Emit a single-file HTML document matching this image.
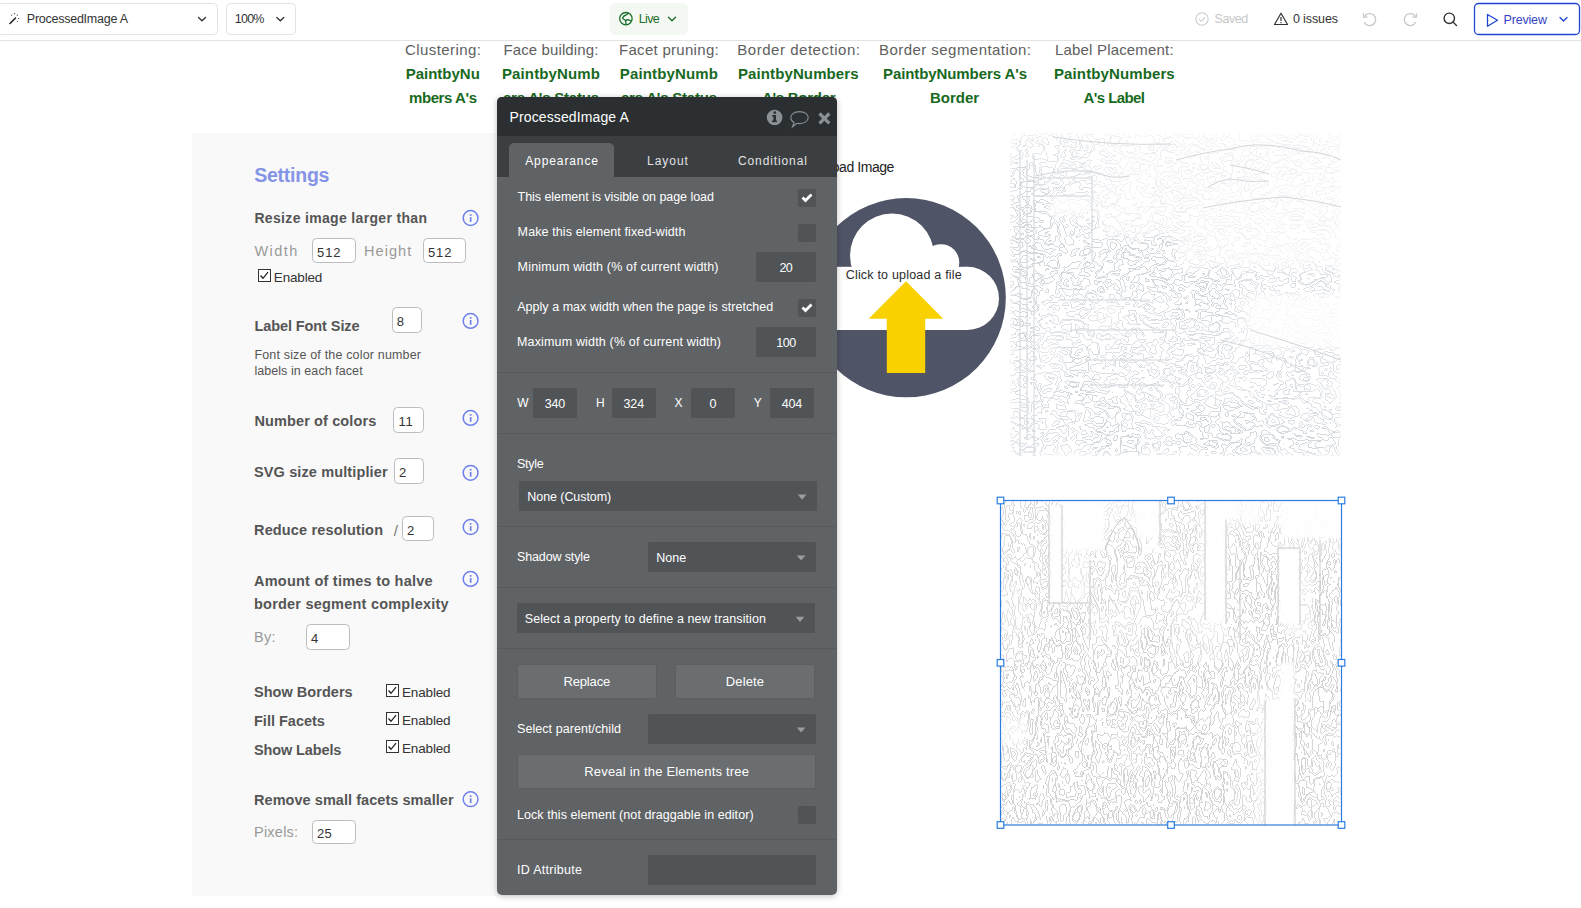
<!DOCTYPE html><html><head><meta charset="utf-8"><title>Bubble editor</title><style>html,body{margin:0;padding:0;background:#fff;overflow:hidden}svg{display:block}text{font-family:"Liberation Sans",sans-serif;white-space:pre}</style></head><body>
<svg width="1581" height="908" viewBox="0 0 1581 908">
<defs><filter id="sh" x="-10%" y="-10%" width="120%" height="120%"><feGaussianBlur in="SourceAlpha" stdDeviation="3"/><feOffset dy="1"/><feComponentTransfer><feFuncA type="linear" slope="0.25"/></feComponentTransfer><feMerge><feMergeNode/><feMergeNode in="SourceGraphic"/></feMerge></filter></defs>
<rect x="0" y="0" width="1581.00" height="908.00" fill="#ffffff"/>
<rect x="0" y="40" width="1581.00" height="1.00" fill="#e3e3e3"/>
<rect x="-2.5" y="3.5" width="220.00" height="31.00" fill="#ffffff" rx="4" stroke="#e2e2e2" stroke-width="1"/>
<rect x="226.5" y="3.5" width="69.00" height="31.00" fill="#ffffff" rx="4" stroke="#e2e2e2" stroke-width="1"/>
<rect x="610" y="3" width="78.00" height="32.00" fill="#f3f8f3" rx="6"/>
<rect x="1474.5" y="3.5" width="105.00" height="31.00" fill="#ffffff" rx="4" stroke="#1f45d1" stroke-width="1.3"/>
<g fill="none" stroke="#333" stroke-width="1.3" stroke-linecap="round"><path d="M198.5 17.5 L202 20.8 L205.5 17.5"/><path d="M276.8 17.5 L280.3 20.8 L283.8 17.5"/></g>
<path d="M10 23.5 L15.5 18" stroke="#222" stroke-width="1.6" stroke-linecap="round"/><g fill="#444"><circle cx="14.5" cy="13.8" r="0.7"/><circle cx="11.7" cy="15.2" r="0.6"/><circle cx="17.3" cy="15.2" r="0.6"/><circle cx="18.6" cy="18.5" r="0.6"/><circle cx="17.3" cy="21.5" r="0.6"/></g>
<g fill="none" stroke="#1b6e2a" stroke-width="1.3"><circle cx="625.9" cy="18.7" r="6.2"/><path d="M622.4 18.3 Q623.5 15.6 626 15 Q627.5 14.5 628 13.2"/><path d="M622.4 18.3 L625.5 20.6 L626.1 24.6"/><path d="M625.5 20.6 Q627.5 18.6 631.4 21.3"/><path d="M668.5 17.3 L672 20.8 L675.5 17.3" stroke-linecap="round"/></g>
<g fill="none" stroke="#cccccc" stroke-width="1.1"><circle cx="1202" cy="19" r="6.2"/><path d="M1199 19.2 L1201.2 21.3 L1205 17.3"/></g>
<g fill="none" stroke="#333" stroke-width="1.2" stroke-linejoin="round"><path d="M1281 13.2 L1287.5 24.5 L1274.5 24.5 Z"/></g><rect x="1280.4" y="17" width="1.2" height="4" fill="#333"/><rect x="1280.4" y="22" width="1.2" height="1.2" fill="#333"/>
<g fill="none" stroke="#c8c8c8" stroke-width="1.3"><path d="M1364.5 16.5 A6 6 0 1 1 1364.2 22"/><path d="M1363.3 13.5 L1363.8 17.3 L1367.5 16.8"/><path d="M1415.5 16.5 A6 6 0 1 0 1415.8 22"/><path d="M1416.7 13.5 L1416.2 17.3 L1412.5 16.8"/></g>
<g fill="none" stroke="#333" stroke-width="1.4"><circle cx="1449.3" cy="18.3" r="5.2"/><path d="M1453 22 L1456.5 25.5" stroke-linecap="round"/></g>
<path d="M1487.5 14.5 L1497.5 20.3 L1487.5 26.2 Z" fill="none" stroke="#1f45d1" stroke-width="1.3" stroke-linejoin="round"/><path d="M1560 17.5 L1563.5 21 L1567 17.5" fill="none" stroke="#1f45d1" stroke-width="1.3" stroke-linecap="round"/>
<text x="26.80" y="23.00" font-size="12.5" fill="#333333" textLength="101.17" lengthAdjust="spacing">ProcessedImage A</text>
<text x="234.80" y="22.80" font-size="12.5" fill="#333333" textLength="29.62" lengthAdjust="spacing">100%</text>
<text x="638.70" y="22.90" font-size="12.5" fill="#1b6e2a" textLength="21.08" lengthAdjust="spacing">Live</text>
<text x="1214.60" y="22.80" font-size="12.5" fill="#c6c6c6" textLength="33.69" lengthAdjust="spacing">Saved</text>
<text x="1292.90" y="22.80" font-size="12.5" fill="#333333" textLength="45.10" lengthAdjust="spacing">0 issues</text>
<text x="1503.50" y="23.70" font-size="12.5" fill="#3443c6" textLength="43.41" lengthAdjust="spacing">Preview</text>
<text x="405.00" y="55.00" font-size="15" fill="#606060" textLength="76.00" lengthAdjust="spacing">Clustering:</text>
<text x="503.40" y="55.00" font-size="15" fill="#606060" textLength="94.99" lengthAdjust="spacing">Face building:</text>
<text x="619.00" y="55.00" font-size="15" fill="#606060" textLength="99.69" lengthAdjust="spacing">Facet pruning:</text>
<text x="737.30" y="55.00" font-size="15" fill="#606060" textLength="122.68" lengthAdjust="spacing">Border detection:</text>
<text x="879.00" y="55.00" font-size="15" fill="#606060" textLength="152.01" lengthAdjust="spacing">Border segmentation:</text>
<text x="1055.00" y="55.00" font-size="15" fill="#606060" textLength="118.60" lengthAdjust="spacing">Label Placement:</text>
<text x="405.70" y="79.30" font-size="15" fill="#17691e" font-weight="700">PaintbyNu</text>
<text x="502.00" y="79.30" font-size="15" fill="#17691e" font-weight="700" textLength="97.82" lengthAdjust="spacing">PaintbyNumb</text>
<text x="619.80" y="79.30" font-size="15" fill="#17691e" font-weight="700" textLength="98.02" lengthAdjust="spacing">PaintbyNumb</text>
<text x="738.00" y="79.30" font-size="15" fill="#17691e" font-weight="700" textLength="120.59" lengthAdjust="spacing">PaintbyNumbers</text>
<text x="883.00" y="79.30" font-size="15" fill="#17691e" font-weight="700" textLength="144.00" lengthAdjust="spacing">PaintbyNumbers A&#39;s</text>
<text x="1054.00" y="79.30" font-size="15" fill="#17691e" font-weight="700" textLength="120.69" lengthAdjust="spacing">PaintbyNumbers</text>
<text x="409.00" y="102.70" font-size="15" fill="#17691e" font-weight="700" textLength="67.97" lengthAdjust="spacing">mbers A&#39;s</text>
<text x="503.00" y="102.70" font-size="15" fill="#17691e" font-weight="700" textLength="95.98" lengthAdjust="spacing">ers A&#39;s Status</text>
<text x="621.00" y="102.70" font-size="15" fill="#17691e" font-weight="700" textLength="95.98" lengthAdjust="spacing">ers A&#39;s Status</text>
<text x="762.00" y="102.70" font-size="15" fill="#17691e" font-weight="700" textLength="73.58" lengthAdjust="spacing">A&#39;s Border</text>
<text x="930.00" y="102.70" font-size="15" fill="#17691e" font-weight="700">Border</text>
<text x="1083.60" y="102.70" font-size="15" fill="#17691e" font-weight="700" textLength="61.39" lengthAdjust="spacing">A&#39;s Label</text>
<rect x="192" y="133" width="328.00" height="763.00" fill="#f9f9f9"/>
<rect x="312.5" y="238.5" width="43.00" height="24.00" fill="#ffffff" rx="4" stroke="#bdbdbd" stroke-width="1"/>
<rect x="423.5" y="238.5" width="42.00" height="24.00" fill="#ffffff" rx="4" stroke="#bdbdbd" stroke-width="1"/>
<rect x="392.5" y="307.5" width="29.00" height="25.00" fill="#ffffff" rx="4" stroke="#bdbdbd" stroke-width="1"/>
<rect x="393.5" y="407.5" width="30.00" height="25.00" fill="#ffffff" rx="4" stroke="#bdbdbd" stroke-width="1"/>
<rect x="394.5" y="458.5" width="29.00" height="25.00" fill="#ffffff" rx="4" stroke="#bdbdbd" stroke-width="1"/>
<rect x="402.5" y="516.5" width="31.00" height="24.00" fill="#ffffff" rx="4" stroke="#bdbdbd" stroke-width="1"/>
<rect x="306.5" y="624.5" width="43.00" height="25.00" fill="#ffffff" rx="4" stroke="#bdbdbd" stroke-width="1"/>
<rect x="312.5" y="820.5" width="43.00" height="23.00" fill="#ffffff" rx="4" stroke="#bdbdbd" stroke-width="1"/>
<rect x="258.5" y="269.5" width="12.00" height="12.00" fill="#ffffff" stroke="#333" stroke-width="1"/>
<path d="M260.5 275.5 L263 278.3 L268 272.2" fill="none" stroke="#222" stroke-width="1.3"/>
<rect x="386.5" y="684.5" width="12.00" height="12.00" fill="#ffffff" stroke="#333" stroke-width="1"/>
<path d="M388.5 690.5 L391 693.3 L396 687.2" fill="none" stroke="#222" stroke-width="1.3"/>
<rect x="386.5" y="712.5" width="12.00" height="12.00" fill="#ffffff" stroke="#333" stroke-width="1"/>
<path d="M388.5 718.5 L391 721.3 L396 715.2" fill="none" stroke="#222" stroke-width="1.3"/>
<rect x="386.5" y="740.5" width="12.00" height="12.00" fill="#ffffff" stroke="#333" stroke-width="1"/>
<path d="M388.5 746.5 L391 749.3 L396 743.2" fill="none" stroke="#222" stroke-width="1.3"/>
<circle cx="470.6" cy="218" r="7.4" fill="none" stroke="#6f80ee" stroke-width="1.5"/><rect x="469.8" y="217.1" width="1.7" height="4.8" fill="#6f80ee"/><rect x="469.8" y="214.1" width="1.7" height="1.7" fill="#6f80ee"/>
<circle cx="470.6" cy="320.9" r="7.4" fill="none" stroke="#6f80ee" stroke-width="1.5"/><rect x="469.8" y="320.0" width="1.7" height="4.8" fill="#6f80ee"/><rect x="469.8" y="317.0" width="1.7" height="1.7" fill="#6f80ee"/>
<circle cx="470.6" cy="417.9" r="7.4" fill="none" stroke="#6f80ee" stroke-width="1.5"/><rect x="469.8" y="417.0" width="1.7" height="4.8" fill="#6f80ee"/><rect x="469.8" y="414.0" width="1.7" height="1.7" fill="#6f80ee"/>
<circle cx="470.6" cy="472.8" r="7.4" fill="none" stroke="#6f80ee" stroke-width="1.5"/><rect x="469.8" y="471.9" width="1.7" height="4.8" fill="#6f80ee"/><rect x="469.8" y="468.9" width="1.7" height="1.7" fill="#6f80ee"/>
<circle cx="470.6" cy="527" r="7.4" fill="none" stroke="#6f80ee" stroke-width="1.5"/><rect x="469.8" y="526.1" width="1.7" height="4.8" fill="#6f80ee"/><rect x="469.8" y="523.1" width="1.7" height="1.7" fill="#6f80ee"/>
<circle cx="470.6" cy="578.9" r="7.4" fill="none" stroke="#6f80ee" stroke-width="1.5"/><rect x="469.8" y="578.0" width="1.7" height="4.8" fill="#6f80ee"/><rect x="469.8" y="575.0" width="1.7" height="1.7" fill="#6f80ee"/>
<circle cx="470.6" cy="799.2" r="7.4" fill="none" stroke="#6f80ee" stroke-width="1.5"/><rect x="469.8" y="798.3" width="1.7" height="4.8" fill="#6f80ee"/><rect x="469.8" y="795.3" width="1.7" height="1.7" fill="#6f80ee"/>
<text x="254.20" y="181.70" font-size="19.5" fill="#8494e6" font-weight="700" textLength="75.28" lengthAdjust="spacing">Settings</text>
<text x="254.40" y="223.00" font-size="14" fill="#555555" font-weight="700" textLength="172.60" lengthAdjust="spacing">Resize image larger than</text>
<text x="254.40" y="255.80" font-size="14.5" fill="#9a9a9a" textLength="43.01" lengthAdjust="spacing">Width</text>
<text x="317.00" y="256.90" font-size="13" fill="#333333" textLength="23.59" lengthAdjust="spacing">512</text>
<text x="364.00" y="255.80" font-size="14.5" fill="#9a9a9a" textLength="47.21" lengthAdjust="spacing">Height</text>
<text x="427.90" y="256.90" font-size="13" fill="#333333" textLength="23.49" lengthAdjust="spacing">512</text>
<text x="273.80" y="281.60" font-size="13.5" fill="#333333" textLength="48.59" lengthAdjust="spacing">Enabled</text>
<text x="254.40" y="330.80" font-size="14.5" fill="#555555" font-weight="700" textLength="105.19" lengthAdjust="spacing">Label Font Size</text>
<text x="396.70" y="325.80" font-size="13" fill="#333333">8</text>
<text x="254.40" y="358.70" font-size="12.5" fill="#555555" textLength="166.58" lengthAdjust="spacing">Font size of the color number</text>
<text x="254.40" y="375.40" font-size="12.5" fill="#555555" textLength="108.21" lengthAdjust="spacing">labels in each facet</text>
<text x="254.40" y="425.80" font-size="14.5" fill="#555555" font-weight="700" textLength="121.89" lengthAdjust="spacing">Number of colors</text>
<text x="398.60" y="426.10" font-size="13" fill="#333333" textLength="14.09" lengthAdjust="spacing">11</text>
<text x="254.00" y="476.60" font-size="14.5" fill="#555555" font-weight="700" textLength="133.59" lengthAdjust="spacing">SVG size multiplier</text>
<text x="399.00" y="477.00" font-size="13" fill="#333333">2</text>
<text x="254.00" y="535.00" font-size="14.5" fill="#555555" font-weight="700" textLength="128.99" lengthAdjust="spacing">Reduce resolution</text>
<text x="393.80" y="535.50" font-size="15" fill="#777777">/</text>
<text x="407.00" y="535.20" font-size="13" fill="#333333">2</text>
<text x="254.00" y="586.00" font-size="14.5" fill="#555555" font-weight="700" textLength="178.61" lengthAdjust="spacing">Amount of times to halve</text>
<text x="254.00" y="609.10" font-size="14.5" fill="#555555" font-weight="700" textLength="194.61" lengthAdjust="spacing">border segment complexity</text>
<text x="254.00" y="642.20" font-size="14.5" fill="#9a9a9a" textLength="21.60" lengthAdjust="spacing">By:</text>
<text x="311.00" y="643.00" font-size="13" fill="#333333">4</text>
<text x="254.00" y="697.00" font-size="14.5" fill="#555555" font-weight="700" textLength="98.69" lengthAdjust="spacing">Show Borders</text>
<text x="402.00" y="697.00" font-size="13.5" fill="#333333" textLength="48.59" lengthAdjust="spacing">Enabled</text>
<text x="254.00" y="725.50" font-size="14.5" fill="#555555" font-weight="700">Fill Facets</text>
<text x="402.00" y="724.80" font-size="13.5" fill="#333333" textLength="48.59" lengthAdjust="spacing">Enabled</text>
<text x="254.00" y="754.70" font-size="14.5" fill="#555555" font-weight="700" textLength="87.38" lengthAdjust="spacing">Show Labels</text>
<text x="402.00" y="753.00" font-size="13.5" fill="#333333" textLength="48.59" lengthAdjust="spacing">Enabled</text>
<text x="254.00" y="804.70" font-size="14.5" fill="#555555" font-weight="700" textLength="199.58" lengthAdjust="spacing">Remove small facets smaller</text>
<text x="254.00" y="836.90" font-size="14.5" fill="#9a9a9a" textLength="44.11" lengthAdjust="spacing">Pixels:</text>
<text x="317.00" y="837.70" font-size="13" fill="#333333" textLength="14.81" lengthAdjust="spacing">25</text>
<circle cx="906.2" cy="297.7" r="99.6" fill="#4f5466"/>
<g fill="#ffffff"><circle cx="892" cy="255.5" r="42"/><circle cx="941" cy="262.5" r="18.3"/><circle cx="967.4" cy="298.4" r="31.6"/><circle cx="830" cy="298.4" r="31.6"/><rect x="830" y="266.8" width="137.4" height="63.2"/></g>
<path d="M906 281.2 L943.2 318.7 L925.2 318.7 L925.2 372.9 L886.8 372.9 L886.8 318.7 L868.7 318.7 Z" fill="#f9d100"/>
<text x="845.70" y="279.40" font-size="12.5" fill="#2b2b2b" textLength="116.01" lengthAdjust="spacing">Click to upload a file</text>
<text x="812.00" y="171.50" font-size="14" fill="#222222" textLength="82.41" lengthAdjust="spacing">Upload Image</text>
<g id="img1"><filter id="f1" filterUnits="userSpaceOnUse" x="1010" y="133" width="331" height="323" color-interpolation-filters="sRGB"><feTurbulence type="fractalNoise" baseFrequency="0.05 0.075" numOctaves="3" seed="3" result="n"/><feComponentTransfer in="n" result="b"><feFuncR type="discrete" tableValues="0 1 0 1 0 1 0 1"/><feFuncG type="discrete" tableValues="0 1 0 1 0 1 0 1"/><feFuncB type="discrete" tableValues="0 1 0 1 0 1 0 1"/><feFuncA type="linear" slope="0" intercept="1"/></feComponentTransfer><feConvolveMatrix in="b" order="3" kernelMatrix="0 -1 0 -1 4 -1 0 -1 0" preserveAlpha="true" result="e"/><feColorMatrix in="e" type="matrix" values="0 0 0 0 0.83  0 0 0 0 0.85  0 0 0 0 0.87  1 0 0 0 0" result="lines"/><feColorMatrix in="SourceGraphic" type="matrix" values="0 0 0 0 0  0 0 0 0 0  0 0 0 0 0  1 0 0 0 0" result="ma"/><feGaussianBlur in="ma" stdDeviation="4" result="m"/><feComposite in="lines" in2="m" operator="in"/></filter><g filter="url(#f1)"><rect x="1010.0" y="133.0" width="28.1" height="27.4" fill="rgb(159,159,159)"/><rect x="1037.6" y="133.0" width="28.1" height="27.4" fill="rgb(159,159,159)"/><rect x="1065.2" y="133.0" width="28.1" height="27.4" fill="rgb(159,159,159)"/><rect x="1092.8" y="133.0" width="28.1" height="27.4" fill="rgb(111,111,111)"/><rect x="1120.3" y="133.0" width="28.1" height="27.4" fill="rgb(87,87,87)"/><rect x="1147.9" y="133.0" width="28.1" height="27.4" fill="rgb(111,111,111)"/><rect x="1175.5" y="133.0" width="28.1" height="27.4" fill="rgb(84,84,84)"/><rect x="1203.1" y="133.0" width="28.1" height="27.4" fill="rgb(84,84,84)"/><rect x="1230.7" y="133.0" width="28.1" height="27.4" fill="rgb(84,84,84)"/><rect x="1258.2" y="133.0" width="28.1" height="27.4" fill="rgb(84,84,84)"/><rect x="1285.8" y="133.0" width="28.1" height="27.4" fill="rgb(84,84,84)"/><rect x="1313.4" y="133.0" width="28.1" height="27.4" fill="rgb(84,84,84)"/><rect x="1010.0" y="159.9" width="28.1" height="27.4" fill="rgb(255,255,255)"/><rect x="1037.6" y="159.9" width="28.1" height="27.4" fill="rgb(159,159,159)"/><rect x="1065.2" y="159.9" width="28.1" height="27.4" fill="rgb(159,159,159)"/><rect x="1092.8" y="159.9" width="28.1" height="27.4" fill="rgb(111,111,111)"/><rect x="1120.3" y="159.9" width="28.1" height="27.4" fill="rgb(87,87,87)"/><rect x="1147.9" y="159.9" width="28.1" height="27.4" fill="rgb(87,87,87)"/><rect x="1175.5" y="159.9" width="28.1" height="27.4" fill="rgb(78,78,78)"/><rect x="1203.1" y="159.9" width="28.1" height="27.4" fill="rgb(72,72,72)"/><rect x="1230.7" y="159.9" width="28.1" height="27.4" fill="rgb(87,87,87)"/><rect x="1258.2" y="159.9" width="28.1" height="27.4" fill="rgb(87,87,87)"/><rect x="1285.8" y="159.9" width="28.1" height="27.4" fill="rgb(78,78,78)"/><rect x="1313.4" y="159.9" width="28.1" height="27.4" fill="rgb(84,84,84)"/><rect x="1010.0" y="186.8" width="28.1" height="27.4" fill="rgb(255,255,255)"/><rect x="1037.6" y="186.8" width="28.1" height="27.4" fill="rgb(255,255,255)"/><rect x="1065.2" y="186.8" width="28.1" height="27.4" fill="rgb(255,255,255)"/><rect x="1092.8" y="186.8" width="28.1" height="27.4" fill="rgb(111,111,111)"/><rect x="1120.3" y="186.8" width="28.1" height="27.4" fill="rgb(87,87,87)"/><rect x="1147.9" y="186.8" width="28.1" height="27.4" fill="rgb(111,111,111)"/><rect x="1175.5" y="186.8" width="28.1" height="27.4" fill="rgb(93,93,93)"/><rect x="1203.1" y="186.8" width="28.1" height="27.4" fill="rgb(72,72,72)"/><rect x="1230.7" y="186.8" width="28.1" height="27.4" fill="rgb(78,78,78)"/><rect x="1258.2" y="186.8" width="28.1" height="27.4" fill="rgb(84,84,84)"/><rect x="1285.8" y="186.8" width="28.1" height="27.4" fill="rgb(72,72,72)"/><rect x="1313.4" y="186.8" width="28.1" height="27.4" fill="rgb(78,78,78)"/><rect x="1010.0" y="213.8" width="28.1" height="27.4" fill="rgb(255,255,255)"/><rect x="1037.6" y="213.8" width="28.1" height="27.4" fill="rgb(255,255,255)"/><rect x="1065.2" y="213.8" width="28.1" height="27.4" fill="rgb(207,207,207)"/><rect x="1092.8" y="213.8" width="28.1" height="27.4" fill="rgb(207,207,207)"/><rect x="1120.3" y="213.8" width="28.1" height="27.4" fill="rgb(207,207,207)"/><rect x="1147.9" y="213.8" width="28.1" height="27.4" fill="rgb(255,255,255)"/><rect x="1175.5" y="213.8" width="28.1" height="27.4" fill="rgb(107,107,107)"/><rect x="1203.1" y="213.8" width="28.1" height="27.4" fill="rgb(84,84,84)"/><rect x="1230.7" y="213.8" width="28.1" height="27.4" fill="rgb(84,84,84)"/><rect x="1258.2" y="213.8" width="28.1" height="27.4" fill="rgb(72,72,72)"/><rect x="1285.8" y="213.8" width="28.1" height="27.4" fill="rgb(93,93,93)"/><rect x="1313.4" y="213.8" width="28.1" height="27.4" fill="rgb(93,93,93)"/><rect x="1010.0" y="240.7" width="28.1" height="27.4" fill="rgb(255,255,255)"/><rect x="1037.6" y="240.7" width="28.1" height="27.4" fill="rgb(255,255,255)"/><rect x="1065.2" y="240.7" width="28.1" height="27.4" fill="rgb(255,255,255)"/><rect x="1092.8" y="240.7" width="28.1" height="27.4" fill="rgb(255,255,255)"/><rect x="1120.3" y="240.7" width="28.1" height="27.4" fill="rgb(255,255,255)"/><rect x="1147.9" y="240.7" width="28.1" height="27.4" fill="rgb(255,255,255)"/><rect x="1175.5" y="240.7" width="28.1" height="27.4" fill="rgb(107,107,107)"/><rect x="1203.1" y="240.7" width="28.1" height="27.4" fill="rgb(107,107,107)"/><rect x="1230.7" y="240.7" width="28.1" height="27.4" fill="rgb(84,84,84)"/><rect x="1258.2" y="240.7" width="28.1" height="27.4" fill="rgb(72,72,72)"/><rect x="1285.8" y="240.7" width="28.1" height="27.4" fill="rgb(84,84,84)"/><rect x="1313.4" y="240.7" width="28.1" height="27.4" fill="rgb(84,84,84)"/><rect x="1010.0" y="267.6" width="28.1" height="27.4" fill="rgb(255,255,255)"/><rect x="1037.6" y="267.6" width="28.1" height="27.4" fill="rgb(255,255,255)"/><rect x="1065.2" y="267.6" width="28.1" height="27.4" fill="rgb(255,255,255)"/><rect x="1092.8" y="267.6" width="28.1" height="27.4" fill="rgb(255,255,255)"/><rect x="1120.3" y="267.6" width="28.1" height="27.4" fill="rgb(255,255,255)"/><rect x="1147.9" y="267.6" width="28.1" height="27.4" fill="rgb(255,255,255)"/><rect x="1175.5" y="267.6" width="28.1" height="27.4" fill="rgb(255,255,255)"/><rect x="1203.1" y="267.6" width="28.1" height="27.4" fill="rgb(255,255,255)"/><rect x="1230.7" y="267.6" width="28.1" height="27.4" fill="rgb(207,207,207)"/><rect x="1258.2" y="267.6" width="28.1" height="27.4" fill="rgb(207,207,207)"/><rect x="1285.8" y="267.6" width="28.1" height="27.4" fill="rgb(207,207,207)"/><rect x="1313.4" y="267.6" width="28.1" height="27.4" fill="rgb(207,207,207)"/><rect x="1010.0" y="294.5" width="28.1" height="27.4" fill="rgb(255,255,255)"/><rect x="1037.6" y="294.5" width="28.1" height="27.4" fill="rgb(207,207,207)"/><rect x="1065.2" y="294.5" width="28.1" height="27.4" fill="rgb(207,207,207)"/><rect x="1092.8" y="294.5" width="28.1" height="27.4" fill="rgb(159,159,159)"/><rect x="1120.3" y="294.5" width="28.1" height="27.4" fill="rgb(207,207,207)"/><rect x="1147.9" y="294.5" width="28.1" height="27.4" fill="rgb(207,207,207)"/><rect x="1175.5" y="294.5" width="28.1" height="27.4" fill="rgb(255,255,255)"/><rect x="1203.1" y="294.5" width="28.1" height="27.4" fill="rgb(255,255,255)"/><rect x="1230.7" y="294.5" width="28.1" height="27.4" fill="rgb(159,159,159)"/><rect x="1258.2" y="294.5" width="28.1" height="27.4" fill="rgb(92,92,92)"/><rect x="1285.8" y="294.5" width="28.1" height="27.4" fill="rgb(92,92,92)"/><rect x="1313.4" y="294.5" width="28.1" height="27.4" fill="rgb(92,92,92)"/><rect x="1010.0" y="321.4" width="28.1" height="27.4" fill="rgb(255,255,255)"/><rect x="1037.6" y="321.4" width="28.1" height="27.4" fill="rgb(159,159,159)"/><rect x="1065.2" y="321.4" width="28.1" height="27.4" fill="rgb(207,207,207)"/><rect x="1092.8" y="321.4" width="28.1" height="27.4" fill="rgb(159,159,159)"/><rect x="1120.3" y="321.4" width="28.1" height="27.4" fill="rgb(207,207,207)"/><rect x="1147.9" y="321.4" width="28.1" height="27.4" fill="rgb(207,207,207)"/><rect x="1175.5" y="321.4" width="28.1" height="27.4" fill="rgb(207,207,207)"/><rect x="1203.1" y="321.4" width="28.1" height="27.4" fill="rgb(207,207,207)"/><rect x="1230.7" y="321.4" width="28.1" height="27.4" fill="rgb(159,159,159)"/><rect x="1258.2" y="321.4" width="28.1" height="27.4" fill="rgb(112,112,112)"/><rect x="1285.8" y="321.4" width="28.1" height="27.4" fill="rgb(92,92,92)"/><rect x="1313.4" y="321.4" width="28.1" height="27.4" fill="rgb(92,92,92)"/><rect x="1010.0" y="348.3" width="28.1" height="27.4" fill="rgb(207,207,207)"/><rect x="1037.6" y="348.3" width="28.1" height="27.4" fill="rgb(159,159,159)"/><rect x="1065.2" y="348.3" width="28.1" height="27.4" fill="rgb(255,255,255)"/><rect x="1092.8" y="348.3" width="28.1" height="27.4" fill="rgb(207,207,207)"/><rect x="1120.3" y="348.3" width="28.1" height="27.4" fill="rgb(207,207,207)"/><rect x="1147.9" y="348.3" width="28.1" height="27.4" fill="rgb(207,207,207)"/><rect x="1175.5" y="348.3" width="28.1" height="27.4" fill="rgb(207,207,207)"/><rect x="1203.1" y="348.3" width="28.1" height="27.4" fill="rgb(207,207,207)"/><rect x="1230.7" y="348.3" width="28.1" height="27.4" fill="rgb(207,207,207)"/><rect x="1258.2" y="348.3" width="28.1" height="27.4" fill="rgb(207,207,207)"/><rect x="1285.8" y="348.3" width="28.1" height="27.4" fill="rgb(207,207,207)"/><rect x="1313.4" y="348.3" width="28.1" height="27.4" fill="rgb(207,207,207)"/><rect x="1010.0" y="375.2" width="28.1" height="27.4" fill="rgb(207,207,207)"/><rect x="1037.6" y="375.2" width="28.1" height="27.4" fill="rgb(207,207,207)"/><rect x="1065.2" y="375.2" width="28.1" height="27.4" fill="rgb(255,255,255)"/><rect x="1092.8" y="375.2" width="28.1" height="27.4" fill="rgb(207,207,207)"/><rect x="1120.3" y="375.2" width="28.1" height="27.4" fill="rgb(207,207,207)"/><rect x="1147.9" y="375.2" width="28.1" height="27.4" fill="rgb(207,207,207)"/><rect x="1175.5" y="375.2" width="28.1" height="27.4" fill="rgb(207,207,207)"/><rect x="1203.1" y="375.2" width="28.1" height="27.4" fill="rgb(159,159,159)"/><rect x="1230.7" y="375.2" width="28.1" height="27.4" fill="rgb(159,159,159)"/><rect x="1258.2" y="375.2" width="28.1" height="27.4" fill="rgb(207,207,207)"/><rect x="1285.8" y="375.2" width="28.1" height="27.4" fill="rgb(207,207,207)"/><rect x="1313.4" y="375.2" width="28.1" height="27.4" fill="rgb(159,159,159)"/><rect x="1010.0" y="402.2" width="28.1" height="27.4" fill="rgb(207,207,207)"/><rect x="1037.6" y="402.2" width="28.1" height="27.4" fill="rgb(207,207,207)"/><rect x="1065.2" y="402.2" width="28.1" height="27.4" fill="rgb(207,207,207)"/><rect x="1092.8" y="402.2" width="28.1" height="27.4" fill="rgb(255,255,255)"/><rect x="1120.3" y="402.2" width="28.1" height="27.4" fill="rgb(207,207,207)"/><rect x="1147.9" y="402.2" width="28.1" height="27.4" fill="rgb(159,159,159)"/><rect x="1175.5" y="402.2" width="28.1" height="27.4" fill="rgb(255,255,255)"/><rect x="1203.1" y="402.2" width="28.1" height="27.4" fill="rgb(255,255,255)"/><rect x="1230.7" y="402.2" width="28.1" height="27.4" fill="rgb(255,255,255)"/><rect x="1258.2" y="402.2" width="28.1" height="27.4" fill="rgb(207,207,207)"/><rect x="1285.8" y="402.2" width="28.1" height="27.4" fill="rgb(207,207,207)"/><rect x="1313.4" y="402.2" width="28.1" height="27.4" fill="rgb(207,207,207)"/><rect x="1010.0" y="429.1" width="28.1" height="27.4" fill="rgb(207,207,207)"/><rect x="1037.6" y="429.1" width="28.1" height="27.4" fill="rgb(207,207,207)"/><rect x="1065.2" y="429.1" width="28.1" height="27.4" fill="rgb(207,207,207)"/><rect x="1092.8" y="429.1" width="28.1" height="27.4" fill="rgb(255,255,255)"/><rect x="1120.3" y="429.1" width="28.1" height="27.4" fill="rgb(255,255,255)"/><rect x="1147.9" y="429.1" width="28.1" height="27.4" fill="rgb(207,207,207)"/><rect x="1175.5" y="429.1" width="28.1" height="27.4" fill="rgb(255,255,255)"/><rect x="1203.1" y="429.1" width="28.1" height="27.4" fill="rgb(255,255,255)"/><rect x="1230.7" y="429.1" width="28.1" height="27.4" fill="rgb(255,255,255)"/><rect x="1258.2" y="429.1" width="28.1" height="27.4" fill="rgb(255,255,255)"/><rect x="1285.8" y="429.1" width="28.1" height="27.4" fill="rgb(255,255,255)"/><rect x="1313.4" y="429.1" width="28.1" height="27.4" fill="rgb(255,255,255)"/><rect x="1050" y="195" width="40" height="20" fill="rgb(38,38,38)"/><rect x="1280" y="230" width="61" height="30" fill="rgb(76,76,76)"/><rect x="1100" y="200" width="80" height="35" fill="rgb(102,102,102)"/><rect x="1250" y="295" width="91" height="50" fill="rgb(38,38,38)"/><rect x="1180" y="150" width="80" height="35" fill="rgb(102,102,102)"/></g><path d="M1203 208 Q1240 200 1283 197 Q1315 200 1341 207 M1176 160 Q1205 152 1230 149 Q1250 144 1262 145 Q1285 146 1301 151 Q1325 152 1341 160 M1208 187 Q1218 180 1230 179 Q1250 183 1269 181 M1230 165 Q1250 168 1269 174 M1053 137 Q1110 146 1171 144 M1035 176 Q1070 168 1096 172 Q1110 180 1130 176 M1020 150 V456 M1027 160 V440 M1034 155 V456 M1035 178 H1092 M1035 196 H1090 M1092 176 V262 M1060 300 H1150 M1070 330 H1175 M1085 360 H1170 M1090 385 H1160 M1220 340 Q1270 350 1310 375 M1250 330 Q1300 345 1341 360" fill="none" stroke="#d3d6da" stroke-width="1"/></g>
<g id="img2"><filter id="f2" filterUnits="userSpaceOnUse" x="1000" y="500" width="341" height="325" color-interpolation-filters="sRGB"><feTurbulence type="fractalNoise" baseFrequency="0.085 0.045" numOctaves="3" seed="5" result="n"/><feComponentTransfer in="n" result="b"><feFuncR type="discrete" tableValues="0 1 0 1 0 1 0 1"/><feFuncG type="discrete" tableValues="0 1 0 1 0 1 0 1"/><feFuncB type="discrete" tableValues="0 1 0 1 0 1 0 1"/><feFuncA type="linear" slope="0" intercept="1"/></feComponentTransfer><feConvolveMatrix in="b" order="3" kernelMatrix="0 -1 0 -1 4 -1 0 -1 0" preserveAlpha="true" result="e"/><feColorMatrix in="e" type="matrix" values="0 0 0 0 0.83  0 0 0 0 0.83  0 0 0 0 0.83  1 0 0 0 0" result="lines"/><feColorMatrix in="SourceGraphic" type="matrix" values="0 0 0 0 0  0 0 0 0 0  0 0 0 0 0  1 0 0 0 0" result="ma"/><feGaussianBlur in="ma" stdDeviation="1.5" result="m"/><feComposite in="lines" in2="m" operator="in"/></filter><g filter="url(#f2)"><rect x="1000.0" y="500.0" width="28.9" height="27.6" fill="rgb(217,217,217)"/><rect x="1028.4" y="500.0" width="28.9" height="27.6" fill="rgb(217,217,217)"/><rect x="1056.8" y="500.0" width="28.9" height="27.6" fill="rgb(125,125,125)"/><rect x="1085.2" y="500.0" width="28.9" height="27.6" fill="rgb(125,125,125)"/><rect x="1113.7" y="500.0" width="28.9" height="27.6" fill="rgb(125,125,125)"/><rect x="1142.1" y="500.0" width="28.9" height="27.6" fill="rgb(178,178,178)"/><rect x="1170.5" y="500.0" width="28.9" height="27.6" fill="rgb(217,217,217)"/><rect x="1198.9" y="500.0" width="28.9" height="27.6" fill="rgb(125,125,125)"/><rect x="1227.3" y="500.0" width="28.9" height="27.6" fill="rgb(140,140,140)"/><rect x="1255.8" y="500.0" width="28.9" height="27.6" fill="rgb(140,140,140)"/><rect x="1284.2" y="500.0" width="28.9" height="27.6" fill="rgb(140,140,140)"/><rect x="1312.6" y="500.0" width="28.9" height="27.6" fill="rgb(125,125,125)"/><rect x="1000.0" y="527.1" width="28.9" height="27.6" fill="rgb(217,217,217)"/><rect x="1028.4" y="527.1" width="28.9" height="27.6" fill="rgb(217,217,217)"/><rect x="1056.8" y="527.1" width="28.9" height="27.6" fill="rgb(125,125,125)"/><rect x="1085.2" y="527.1" width="28.9" height="27.6" fill="rgb(178,178,178)"/><rect x="1113.7" y="527.1" width="28.9" height="27.6" fill="rgb(217,217,217)"/><rect x="1142.1" y="527.1" width="28.9" height="27.6" fill="rgb(178,178,178)"/><rect x="1170.5" y="527.1" width="28.9" height="27.6" fill="rgb(217,217,217)"/><rect x="1198.9" y="527.1" width="28.9" height="27.6" fill="rgb(140,140,140)"/><rect x="1227.3" y="527.1" width="28.9" height="27.6" fill="rgb(217,217,217)"/><rect x="1255.8" y="527.1" width="28.9" height="27.6" fill="rgb(217,217,217)"/><rect x="1284.2" y="527.1" width="28.9" height="27.6" fill="rgb(178,178,178)"/><rect x="1312.6" y="527.1" width="28.9" height="27.6" fill="rgb(178,178,178)"/><rect x="1000.0" y="554.2" width="28.9" height="27.6" fill="rgb(217,217,217)"/><rect x="1028.4" y="554.2" width="28.9" height="27.6" fill="rgb(217,217,217)"/><rect x="1056.8" y="554.2" width="28.9" height="27.6" fill="rgb(125,125,125)"/><rect x="1085.2" y="554.2" width="28.9" height="27.6" fill="rgb(217,217,217)"/><rect x="1113.7" y="554.2" width="28.9" height="27.6" fill="rgb(217,217,217)"/><rect x="1142.1" y="554.2" width="28.9" height="27.6" fill="rgb(217,217,217)"/><rect x="1170.5" y="554.2" width="28.9" height="27.6" fill="rgb(217,217,217)"/><rect x="1198.9" y="554.2" width="28.9" height="27.6" fill="rgb(125,125,125)"/><rect x="1227.3" y="554.2" width="28.9" height="27.6" fill="rgb(255,255,255)"/><rect x="1255.8" y="554.2" width="28.9" height="27.6" fill="rgb(255,255,255)"/><rect x="1284.2" y="554.2" width="28.9" height="27.6" fill="rgb(178,178,178)"/><rect x="1312.6" y="554.2" width="28.9" height="27.6" fill="rgb(255,255,255)"/><rect x="1000.0" y="581.2" width="28.9" height="27.6" fill="rgb(178,178,178)"/><rect x="1028.4" y="581.2" width="28.9" height="27.6" fill="rgb(217,217,217)"/><rect x="1056.8" y="581.2" width="28.9" height="27.6" fill="rgb(178,178,178)"/><rect x="1085.2" y="581.2" width="28.9" height="27.6" fill="rgb(217,217,217)"/><rect x="1113.7" y="581.2" width="28.9" height="27.6" fill="rgb(178,178,178)"/><rect x="1142.1" y="581.2" width="28.9" height="27.6" fill="rgb(217,217,217)"/><rect x="1170.5" y="581.2" width="28.9" height="27.6" fill="rgb(178,178,178)"/><rect x="1198.9" y="581.2" width="28.9" height="27.6" fill="rgb(125,125,125)"/><rect x="1227.3" y="581.2" width="28.9" height="27.6" fill="rgb(255,255,255)"/><rect x="1255.8" y="581.2" width="28.9" height="27.6" fill="rgb(255,255,255)"/><rect x="1284.2" y="581.2" width="28.9" height="27.6" fill="rgb(140,140,140)"/><rect x="1312.6" y="581.2" width="28.9" height="27.6" fill="rgb(255,255,255)"/><rect x="1000.0" y="608.3" width="28.9" height="27.6" fill="rgb(178,178,178)"/><rect x="1028.4" y="608.3" width="28.9" height="27.6" fill="rgb(217,217,217)"/><rect x="1056.8" y="608.3" width="28.9" height="27.6" fill="rgb(255,255,255)"/><rect x="1085.2" y="608.3" width="28.9" height="27.6" fill="rgb(178,178,178)"/><rect x="1113.7" y="608.3" width="28.9" height="27.6" fill="rgb(178,178,178)"/><rect x="1142.1" y="608.3" width="28.9" height="27.6" fill="rgb(217,217,217)"/><rect x="1170.5" y="608.3" width="28.9" height="27.6" fill="rgb(178,178,178)"/><rect x="1198.9" y="608.3" width="28.9" height="27.6" fill="rgb(125,125,125)"/><rect x="1227.3" y="608.3" width="28.9" height="27.6" fill="rgb(255,255,255)"/><rect x="1255.8" y="608.3" width="28.9" height="27.6" fill="rgb(255,255,255)"/><rect x="1284.2" y="608.3" width="28.9" height="27.6" fill="rgb(140,140,140)"/><rect x="1312.6" y="608.3" width="28.9" height="27.6" fill="rgb(255,255,255)"/><rect x="1000.0" y="635.4" width="28.9" height="27.6" fill="rgb(217,217,217)"/><rect x="1028.4" y="635.4" width="28.9" height="27.6" fill="rgb(255,255,255)"/><rect x="1056.8" y="635.4" width="28.9" height="27.6" fill="rgb(255,255,255)"/><rect x="1085.2" y="635.4" width="28.9" height="27.6" fill="rgb(217,217,217)"/><rect x="1113.7" y="635.4" width="28.9" height="27.6" fill="rgb(217,217,217)"/><rect x="1142.1" y="635.4" width="28.9" height="27.6" fill="rgb(255,255,255)"/><rect x="1170.5" y="635.4" width="28.9" height="27.6" fill="rgb(178,178,178)"/><rect x="1198.9" y="635.4" width="28.9" height="27.6" fill="rgb(178,178,178)"/><rect x="1227.3" y="635.4" width="28.9" height="27.6" fill="rgb(217,217,217)"/><rect x="1255.8" y="635.4" width="28.9" height="27.6" fill="rgb(255,255,255)"/><rect x="1284.2" y="635.4" width="28.9" height="27.6" fill="rgb(217,217,217)"/><rect x="1312.6" y="635.4" width="28.9" height="27.6" fill="rgb(217,217,217)"/><rect x="1000.0" y="662.5" width="28.9" height="27.6" fill="rgb(255,255,255)"/><rect x="1028.4" y="662.5" width="28.9" height="27.6" fill="rgb(255,255,255)"/><rect x="1056.8" y="662.5" width="28.9" height="27.6" fill="rgb(255,255,255)"/><rect x="1085.2" y="662.5" width="28.9" height="27.6" fill="rgb(255,255,255)"/><rect x="1113.7" y="662.5" width="28.9" height="27.6" fill="rgb(255,255,255)"/><rect x="1142.1" y="662.5" width="28.9" height="27.6" fill="rgb(255,255,255)"/><rect x="1170.5" y="662.5" width="28.9" height="27.6" fill="rgb(255,255,255)"/><rect x="1198.9" y="662.5" width="28.9" height="27.6" fill="rgb(255,255,255)"/><rect x="1227.3" y="662.5" width="28.9" height="27.6" fill="rgb(255,255,255)"/><rect x="1255.8" y="662.5" width="28.9" height="27.6" fill="rgb(217,217,217)"/><rect x="1284.2" y="662.5" width="28.9" height="27.6" fill="rgb(217,217,217)"/><rect x="1312.6" y="662.5" width="28.9" height="27.6" fill="rgb(255,255,255)"/><rect x="1000.0" y="689.6" width="28.9" height="27.6" fill="rgb(217,217,217)"/><rect x="1028.4" y="689.6" width="28.9" height="27.6" fill="rgb(255,255,255)"/><rect x="1056.8" y="689.6" width="28.9" height="27.6" fill="rgb(255,255,255)"/><rect x="1085.2" y="689.6" width="28.9" height="27.6" fill="rgb(255,255,255)"/><rect x="1113.7" y="689.6" width="28.9" height="27.6" fill="rgb(255,255,255)"/><rect x="1142.1" y="689.6" width="28.9" height="27.6" fill="rgb(255,255,255)"/><rect x="1170.5" y="689.6" width="28.9" height="27.6" fill="rgb(255,255,255)"/><rect x="1198.9" y="689.6" width="28.9" height="27.6" fill="rgb(255,255,255)"/><rect x="1227.3" y="689.6" width="28.9" height="27.6" fill="rgb(217,217,217)"/><rect x="1255.8" y="689.6" width="28.9" height="27.6" fill="rgb(140,140,140)"/><rect x="1284.2" y="689.6" width="28.9" height="27.6" fill="rgb(217,217,217)"/><rect x="1312.6" y="689.6" width="28.9" height="27.6" fill="rgb(255,255,255)"/><rect x="1000.0" y="716.7" width="28.9" height="27.6" fill="rgb(178,178,178)"/><rect x="1028.4" y="716.7" width="28.9" height="27.6" fill="rgb(255,255,255)"/><rect x="1056.8" y="716.7" width="28.9" height="27.6" fill="rgb(255,255,255)"/><rect x="1085.2" y="716.7" width="28.9" height="27.6" fill="rgb(255,255,255)"/><rect x="1113.7" y="716.7" width="28.9" height="27.6" fill="rgb(217,217,217)"/><rect x="1142.1" y="716.7" width="28.9" height="27.6" fill="rgb(255,255,255)"/><rect x="1170.5" y="716.7" width="28.9" height="27.6" fill="rgb(255,255,255)"/><rect x="1198.9" y="716.7" width="28.9" height="27.6" fill="rgb(255,255,255)"/><rect x="1227.3" y="716.7" width="28.9" height="27.6" fill="rgb(217,217,217)"/><rect x="1255.8" y="716.7" width="28.9" height="27.6" fill="rgb(117,117,117)"/><rect x="1284.2" y="716.7" width="28.9" height="27.6" fill="rgb(255,255,255)"/><rect x="1312.6" y="716.7" width="28.9" height="27.6" fill="rgb(217,217,217)"/><rect x="1000.0" y="743.8" width="28.9" height="27.6" fill="rgb(217,217,217)"/><rect x="1028.4" y="743.8" width="28.9" height="27.6" fill="rgb(255,255,255)"/><rect x="1056.8" y="743.8" width="28.9" height="27.6" fill="rgb(255,255,255)"/><rect x="1085.2" y="743.8" width="28.9" height="27.6" fill="rgb(255,255,255)"/><rect x="1113.7" y="743.8" width="28.9" height="27.6" fill="rgb(217,217,217)"/><rect x="1142.1" y="743.8" width="28.9" height="27.6" fill="rgb(255,255,255)"/><rect x="1170.5" y="743.8" width="28.9" height="27.6" fill="rgb(255,255,255)"/><rect x="1198.9" y="743.8" width="28.9" height="27.6" fill="rgb(255,255,255)"/><rect x="1227.3" y="743.8" width="28.9" height="27.6" fill="rgb(217,217,217)"/><rect x="1255.8" y="743.8" width="28.9" height="27.6" fill="rgb(117,117,117)"/><rect x="1284.2" y="743.8" width="28.9" height="27.6" fill="rgb(255,255,255)"/><rect x="1312.6" y="743.8" width="28.9" height="27.6" fill="rgb(217,217,217)"/><rect x="1000.0" y="770.8" width="28.9" height="27.6" fill="rgb(217,217,217)"/><rect x="1028.4" y="770.8" width="28.9" height="27.6" fill="rgb(255,255,255)"/><rect x="1056.8" y="770.8" width="28.9" height="27.6" fill="rgb(255,255,255)"/><rect x="1085.2" y="770.8" width="28.9" height="27.6" fill="rgb(255,255,255)"/><rect x="1113.7" y="770.8" width="28.9" height="27.6" fill="rgb(255,255,255)"/><rect x="1142.1" y="770.8" width="28.9" height="27.6" fill="rgb(255,255,255)"/><rect x="1170.5" y="770.8" width="28.9" height="27.6" fill="rgb(255,255,255)"/><rect x="1198.9" y="770.8" width="28.9" height="27.6" fill="rgb(255,255,255)"/><rect x="1227.3" y="770.8" width="28.9" height="27.6" fill="rgb(217,217,217)"/><rect x="1255.8" y="770.8" width="28.9" height="27.6" fill="rgb(117,117,117)"/><rect x="1284.2" y="770.8" width="28.9" height="27.6" fill="rgb(255,255,255)"/><rect x="1312.6" y="770.8" width="28.9" height="27.6" fill="rgb(217,217,217)"/><rect x="1000.0" y="797.9" width="28.9" height="27.6" fill="rgb(255,255,255)"/><rect x="1028.4" y="797.9" width="28.9" height="27.6" fill="rgb(255,255,255)"/><rect x="1056.8" y="797.9" width="28.9" height="27.6" fill="rgb(255,255,255)"/><rect x="1085.2" y="797.9" width="28.9" height="27.6" fill="rgb(255,255,255)"/><rect x="1113.7" y="797.9" width="28.9" height="27.6" fill="rgb(255,255,255)"/><rect x="1142.1" y="797.9" width="28.9" height="27.6" fill="rgb(255,255,255)"/><rect x="1170.5" y="797.9" width="28.9" height="27.6" fill="rgb(255,255,255)"/><rect x="1198.9" y="797.9" width="28.9" height="27.6" fill="rgb(255,255,255)"/><rect x="1227.3" y="797.9" width="28.9" height="27.6" fill="rgb(217,217,217)"/><rect x="1255.8" y="797.9" width="28.9" height="27.6" fill="rgb(125,125,125)"/><rect x="1284.2" y="797.9" width="28.9" height="27.6" fill="rgb(217,217,217)"/><rect x="1312.6" y="797.9" width="28.9" height="27.6" fill="rgb(217,217,217)"/><rect x="1050" y="506" width="11" height="96" fill="rgb(8,8,8)"/><rect x="1063" y="500" width="41" height="50" fill="rgb(13,13,13)"/><rect x="1136" y="500" width="23" height="38" fill="rgb(13,13,13)"/><rect x="1206" y="500" width="33" height="19" fill="rgb(13,13,13)"/><rect x="1206" y="519" width="19" height="104" fill="rgb(8,8,8)"/><rect x="1241" y="500" width="18" height="24" fill="rgb(26,26,26)"/><rect x="1281" y="500" width="61" height="38" fill="rgb(20,20,20)"/><rect x="1279" y="549" width="20" height="75" fill="rgb(8,8,8)"/><rect x="1266" y="700" width="28" height="126" fill="rgb(8,8,8)"/><rect x="1280" y="663" width="14" height="37" fill="rgb(13,13,13)"/><rect x="1062" y="555" width="28" height="45" fill="rgb(128,128,128)"/><rect x="1000" y="720" width="25" height="25" fill="rgb(102,102,102)"/></g><path d="M1049 505 V603 M1062 505 V603 M1049 603 H1090 M1105 550 Q1115 520 1125 518 Q1135 530 1140 550 M1160 500 V545 M1205 500 V620 M1226 520 V624 M1278 548 V625 M1300 548 V625 M1278 548 H1300 M1265 700 V826 M1295 700 V826 M1240 560 V640 M1320 540 V640 M1090 560 V640" fill="none" stroke="#c9c9c9" stroke-width="1"/></g>
<rect x="1000.5" y="500.5" width="341" height="324.5" fill="none" stroke="#2a7de1" stroke-width="1.2"/>
<rect x="997.2" y="497.2" width="6.6" height="6.6" fill="#fff" stroke="#2a7de1" stroke-width="1.2"/>
<rect x="997.2" y="659.5" width="6.6" height="6.6" fill="#fff" stroke="#2a7de1" stroke-width="1.2"/>
<rect x="997.2" y="821.7" width="6.6" height="6.6" fill="#fff" stroke="#2a7de1" stroke-width="1.2"/>
<rect x="1167.7" y="497.2" width="6.6" height="6.6" fill="#fff" stroke="#2a7de1" stroke-width="1.2"/>
<rect x="1167.7" y="821.7" width="6.6" height="6.6" fill="#fff" stroke="#2a7de1" stroke-width="1.2"/>
<rect x="1338.2" y="497.2" width="6.6" height="6.6" fill="#fff" stroke="#2a7de1" stroke-width="1.2"/>
<rect x="1338.2" y="659.5" width="6.6" height="6.6" fill="#fff" stroke="#2a7de1" stroke-width="1.2"/>
<rect x="1338.2" y="821.7" width="6.6" height="6.6" fill="#fff" stroke="#2a7de1" stroke-width="1.2"/>
<g filter="url(#sh)">
<path d="M497 102 A5 5 0 0 1 502 97 L832 97 A5 5 0 0 1 837 102 L837 890 A5 5 0 0 1 832 895 L502 895 A5 5 0 0 1 497 890 Z" fill="#5f6366"/>
</g>
<path d="M497 102 A5 5 0 0 1 502 97 L832 97 A5 5 0 0 1 837 102 L837 136 L497 136 Z" fill="#2b2f31"/>
<rect x="497" y="136" width="340.00" height="41.00" fill="#3b3f42"/>
<path d="M509 177 L509 148 A5 5 0 0 1 514 143 L609 143 A5 5 0 0 1 614 148 L614 177 Z" fill="#5f6366"/>
<rect x="497" y="372" width="340.00" height="1.00" fill="#565a5d"/>
<rect x="497" y="433" width="340.00" height="1.00" fill="#565a5d"/>
<rect x="497" y="526" width="340.00" height="1.00" fill="#565a5d"/>
<rect x="497" y="587" width="340.00" height="1.00" fill="#565a5d"/>
<rect x="497" y="648" width="340.00" height="1.00" fill="#565a5d"/>
<rect x="497" y="839" width="340.00" height="1.00" fill="#565a5d"/>
<rect x="798" y="189" width="18.00" height="18.00" fill="#505457" rx="1"/>
<rect x="798" y="224" width="18.00" height="18.00" fill="#505457" rx="1"/>
<rect x="798" y="299" width="18.00" height="18.00" fill="#505457" rx="1"/>
<rect x="798" y="806" width="18.00" height="18.00" fill="#505457" rx="1"/>
<rect x="756" y="252" width="60.00" height="30.00" fill="#505457" rx="1"/>
<rect x="756" y="327" width="60.00" height="30.00" fill="#505457" rx="1"/>
<rect x="533" y="388" width="44.00" height="30.00" fill="#505457" rx="1"/>
<rect x="612" y="388" width="44.00" height="30.00" fill="#505457" rx="1"/>
<rect x="691" y="388" width="44.00" height="30.00" fill="#505457" rx="1"/>
<rect x="770" y="388" width="44.00" height="30.00" fill="#505457" rx="1"/>
<rect x="519" y="481" width="298.00" height="30.00" fill="#505457" rx="1"/>
<rect x="648" y="542" width="168.00" height="30.00" fill="#505457" rx="1"/>
<rect x="517" y="603" width="298.00" height="30.00" fill="#505457" rx="1"/>
<rect x="648" y="714" width="168.00" height="30.00" fill="#505457" rx="1"/>
<rect x="648" y="855" width="168.00" height="30.00" fill="#505457" rx="1"/>
<rect x="517.5" y="664.5" width="139.00" height="34.00" fill="#6a6e71" rx="2" stroke="#5a5e61" stroke-width="1"/>
<rect x="675.5" y="664.5" width="139.00" height="34.00" fill="#6a6e71" rx="2" stroke="#5a5e61" stroke-width="1"/>
<rect x="517.5" y="754.5" width="298.00" height="34.00" fill="#6a6e71" rx="2" stroke="#5a5e61" stroke-width="1"/>
<path d="M802.5 197.6 L805.5 200.6 L811.5 194.6" fill="none" stroke="#fff" stroke-width="2.8"/>
<path d="M802.5 307.6 L805.5 310.6 L811.5 304.6" fill="none" stroke="#fff" stroke-width="2.8"/>
<path d="M797.8 494.5 L806.4 494.5 L802.0999999999999 499.7 Z" fill="#9a9ea1"/>
<path d="M796.8 555.4 L805.4 555.4 L801.0999999999999 560.6 Z" fill="#9a9ea1"/>
<path d="M795.7 616.8 L804.3000000000001 616.8 L800.0 622.0 Z" fill="#9a9ea1"/>
<path d="M796.8 727.4 L805.4 727.4 L801.0999999999999 732.6 Z" fill="#9a9ea1"/>
<circle cx="774.6" cy="117.5" r="7.8" fill="#8a9094"/><rect x="773.4" y="115" width="2.6" height="6.5" fill="#2b2f31"/><rect x="772" y="120.5" width="5" height="1.6" fill="#2b2f31"/><rect x="772" y="115" width="3" height="1.5" fill="#2b2f31"/><circle cx="774.8" cy="112.6" r="1.4" fill="#2b2f31"/>
<path d="M799.5 111.6 C804.7 111.6 808.2 114.2 808.2 117.6 C808.2 121 804.7 123.6 799.5 123.6 C798.6 123.6 797.8 123.5 797 123.3 L792.5 126.8 L794.2 122.5 C791.9 121.4 790.8 119.6 790.8 117.6 C790.8 114.2 794.3 111.6 799.5 111.6 Z" fill="none" stroke="#8a9094" stroke-width="1.1"/>
<path d="M819.5 113.5 L829.3 123.3 M829.3 113.5 L819.5 123.3" stroke="#8a9094" stroke-width="3.2"/>
<text x="509.60" y="122.00" font-size="14" fill="#ffffff" textLength="119.21" lengthAdjust="spacing">ProcessedImage A</text>
<text x="525.20" y="164.50" font-size="12" fill="#ffffff" textLength="72.82" lengthAdjust="spacing">Appearance</text>
<text x="647.00" y="164.50" font-size="12" fill="#e2e2e2" textLength="40.88" lengthAdjust="spacing">Layout</text>
<text x="738.00" y="164.50" font-size="12" fill="#e2e2e2" textLength="68.90" lengthAdjust="spacing">Conditional</text>
<text x="517.60" y="201.20" font-size="12.5" fill="#ffffff" textLength="196.32" lengthAdjust="spacing">This element is visible on page load</text>
<text x="517.60" y="235.90" font-size="12.5" fill="#ffffff" textLength="167.80" lengthAdjust="spacing">Make this element fixed-width</text>
<text x="517.60" y="270.80" font-size="12.5" fill="#ffffff" textLength="200.89" lengthAdjust="spacing">Minimum width (% of current width)</text>
<text x="779.50" y="271.80" font-size="12.5" fill="#ffffff" textLength="13.30" lengthAdjust="spacing">20</text>
<text x="517.20" y="311.20" font-size="12.5" fill="#ffffff" textLength="255.90" lengthAdjust="spacing">Apply a max width when the page is stretched</text>
<text x="517.00" y="346.30" font-size="12.5" fill="#ffffff" textLength="204.01" lengthAdjust="spacing">Maximum width (% of current width)</text>
<text x="776.30" y="347.00" font-size="12.5" fill="#ffffff" textLength="20.00" lengthAdjust="spacing">100</text>
<text x="517.20" y="407.20" font-size="12" fill="#ffffff">W</text>
<text x="544.70" y="408.00" font-size="12.5" fill="#ffffff" textLength="20.50" lengthAdjust="spacing">340</text>
<text x="596.00" y="407.20" font-size="12" fill="#ffffff">H</text>
<text x="623.60" y="408.00" font-size="12.5" fill="#ffffff" textLength="20.50" lengthAdjust="spacing">324</text>
<text x="674.60" y="407.20" font-size="12" fill="#ffffff">X</text>
<text x="709.50" y="408.00" font-size="12.5" fill="#ffffff">0</text>
<text x="753.80" y="407.20" font-size="12" fill="#ffffff">Y</text>
<text x="781.70" y="408.00" font-size="12.5" fill="#ffffff" textLength="20.50" lengthAdjust="spacing">404</text>
<text x="517.00" y="468.30" font-size="12.5" fill="#ffffff" textLength="26.69" lengthAdjust="spacing">Style</text>
<text x="527.30" y="501.00" font-size="12.5" fill="#ffffff" textLength="83.90" lengthAdjust="spacing">None (Custom)</text>
<text x="517.00" y="561.20" font-size="12.5" fill="#ffffff" textLength="72.90" lengthAdjust="spacing">Shadow style</text>
<text x="656.30" y="561.80" font-size="12.5" fill="#ffffff">None</text>
<text x="524.70" y="623.30" font-size="12.5" fill="#ffffff" textLength="241.29" lengthAdjust="spacing">Select a property to define a new transition</text>
<text x="563.40" y="686.00" font-size="13" fill="#ffffff" textLength="46.90" lengthAdjust="spacing">Replace</text>
<text x="725.80" y="686.00" font-size="13" fill="#ffffff" textLength="38.28" lengthAdjust="spacing">Delete</text>
<text x="517.00" y="733.40" font-size="12.5" fill="#ffffff" textLength="103.99" lengthAdjust="spacing">Select parent/child</text>
<text x="584.20" y="776.10" font-size="13" fill="#ffffff" textLength="164.79" lengthAdjust="spacing">Reveal in the Elements tree</text>
<text x="517.00" y="818.60" font-size="12.5" fill="#ffffff" textLength="236.61" lengthAdjust="spacing">Lock this element (not draggable in editor)</text>
<text x="517.00" y="874.40" font-size="12.5" fill="#ffffff" textLength="64.98" lengthAdjust="spacing">ID Attribute</text>
</svg></body></html>
